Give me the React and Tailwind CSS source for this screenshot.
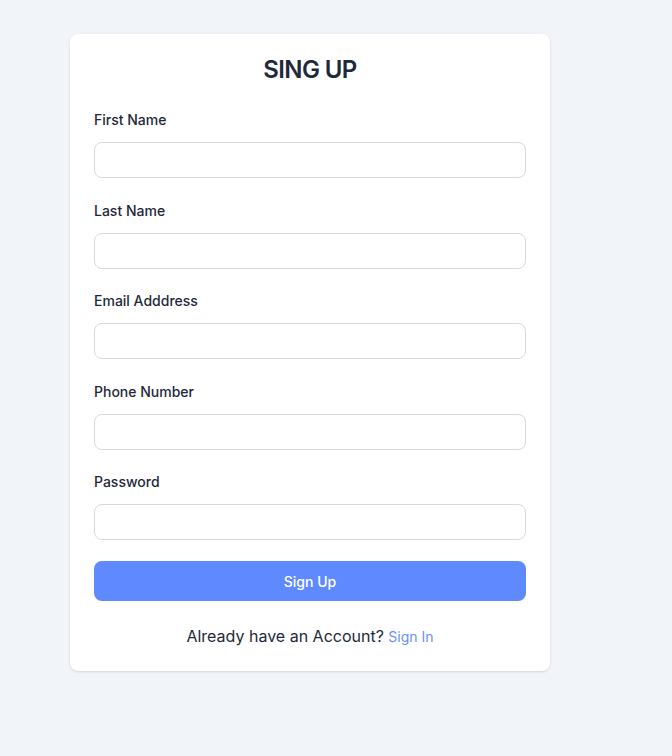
const fields = ['First Name', 'Last Name', 'Email Adddress', 'Phone Number', 'Password'];

const App = () => {
  return (
    <div className="min-h-screen bg-[#f1f5f9] pt-[34px] pl-[70px]" style={{ fontFamily: 'Inter, "Noto Sans", sans-serif' }}>
      <div className="w-[480px] bg-white rounded-lg shadow-sm px-6 pt-[20px] pb-[22px]">
        <h2 className="text-center text-[24px] leading-8 font-semibold text-[#1e293b] tracking-tight">SING UP</h2>
        <form className="mt-[24px]" onSubmit={(e) => e.preventDefault()}>
          {fields.map((label) => (
            <div key={label} className="mb-[22.5px]">
              <label className="block text-[14px] leading-5 font-medium text-[#1e293b] mb-3">{label}</label>
              <input
                type={label === 'Password' ? 'password' : 'text'}
                className="block w-full h-[36px] rounded-lg border border-[#d5dae1] bg-white px-3 text-sm outline-none"
              />
            </div>
          ))}
          <button
            type="submit"
            className="mt-[-1.5px] w-full h-10 rounded-lg bg-[#5f8aff] text-white text-[14px] font-medium"
          >
            Sign Up
          </button>
        </form>
        <p className="mt-[23px] text-center text-[16px] leading-6 text-[#1e293b]">
          Already have an Account? <a href="#" className="text-[14px] text-[#6b8fff]">Sign In</a>
        </p>
      </div>
    </div>
  );
};

export default App;
